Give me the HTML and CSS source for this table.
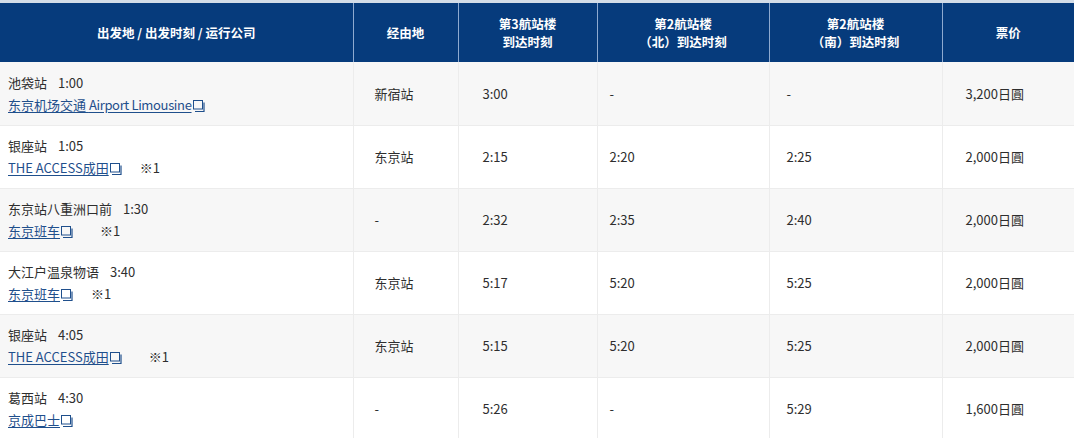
FILE: index.html
```html
<!DOCTYPE html>
<html lang="zh-CN">
<head>
<meta charset="utf-8">
<link rel="stylesheet" href="styles.css">
</head>
<body>
<table class="tt">
  <colgroup>
    <col class="c1"><col class="c2"><col class="c3"><col class="c4"><col class="c5"><col class="c6">
  </colgroup>
  <thead>
    <tr>
      <th>出发地 / 出发时刻 / 运行公司</th>
      <th>经由地</th>
      <th>第3航站楼<br>到达时刻</th>
      <th>第2航站楼<br>（北）到达时刻</th>
      <th>第2航站楼<br>（南）到达时刻</th>
      <th>票价</th>
    </tr>
  </thead>
  <tbody>
    <tr class="odd">
      <td class="from"><div>池袋站<span class="sp"></span>1:00</div><div><a href="#">东京机场交通 <span class="lat">Airport Limousine</span><svg class="ext" viewBox="0 0 12 12"><rect x="0.5" y="0.5" width="9" height="8.5" fill="none" stroke="currentColor"/><path d="M11 2.5V11.5H2" fill="none" stroke="currentColor" stroke-width="1.2"/></svg></a></div></td>
      <td class="p2">新宿站</td>
      <td class="p3">3:00</td>
      <td class="p4">-</td>
      <td class="p5">-</td>
      <td class="p6">3,200日圓</td>
    </tr>
    <tr>
      <td class="from"><div>银座站<span class="sp"></span>1:05</div><div><a href="#">THE ACCESS成田<svg class="ext" viewBox="0 0 12 12"><rect x="0.5" y="0.5" width="9" height="8.5" fill="none" stroke="currentColor"/><path d="M11 2.5V11.5H2" fill="none" stroke="currentColor" stroke-width="1.2"/></svg></a><span class="note gs">※1</span></div></td>
      <td class="p2">东京站</td>
      <td class="p3">2:15</td>
      <td class="p4">2:20</td>
      <td class="p5">2:25</td>
      <td class="p6">2,000日圓</td>
    </tr>
    <tr class="odd">
      <td class="from"><div>东京站八重洲口前<span class="sp"></span>1:30</div><div><a href="#">东京班车<svg class="ext" viewBox="0 0 12 12"><rect x="0.5" y="0.5" width="9" height="8.5" fill="none" stroke="currentColor"/><path d="M11 2.5V11.5H2" fill="none" stroke="currentColor" stroke-width="1.2"/></svg></a><span class="note gl">※1</span></div></td>
      <td class="p2">-</td>
      <td class="p3">2:32</td>
      <td class="p4">2:35</td>
      <td class="p5">2:40</td>
      <td class="p6">2,000日圓</td>
    </tr>
    <tr>
      <td class="from"><div>大江户温泉物语<span class="sp"></span>3:40</div><div><a href="#">东京班车<svg class="ext" viewBox="0 0 12 12"><rect x="0.5" y="0.5" width="9" height="8.5" fill="none" stroke="currentColor"/><path d="M11 2.5V11.5H2" fill="none" stroke="currentColor" stroke-width="1.2"/></svg></a><span class="note gs">※1</span></div></td>
      <td class="p2">东京站</td>
      <td class="p3">5:17</td>
      <td class="p4">5:20</td>
      <td class="p5">5:25</td>
      <td class="p6">2,000日圓</td>
    </tr>
    <tr class="odd">
      <td class="from"><div>银座站<span class="sp"></span>4:05</div><div><a href="#">THE ACCESS成田<svg class="ext" viewBox="0 0 12 12"><rect x="0.5" y="0.5" width="9" height="8.5" fill="none" stroke="currentColor"/><path d="M11 2.5V11.5H2" fill="none" stroke="currentColor" stroke-width="1.2"/></svg></a><span class="note gl">※1</span></div></td>
      <td class="p2">东京站</td>
      <td class="p3">5:15</td>
      <td class="p4">5:20</td>
      <td class="p5">5:25</td>
      <td class="p6">2,000日圓</td>
    </tr>
    <tr>
      <td class="from"><div>葛西站<span class="sp"></span>4:30</div><div><a href="#">京成巴士<svg class="ext" viewBox="0 0 12 12"><rect x="0.5" y="0.5" width="9" height="8.5" fill="none" stroke="currentColor"/><path d="M11 2.5V11.5H2" fill="none" stroke="currentColor" stroke-width="1.2"/></svg></a></div></td>
      <td class="p2">-</td>
      <td class="p3">5:26</td>
      <td class="p4">-</td>
      <td class="p5">5:29</td>
      <td class="p6">1,600日圓</td>
    </tr>
  </tbody>
</table>
</body>
</html>
```
FILE: styles.css
```css
html, body {
  margin: 0;
  padding: 0;
  background: #ffffff;
}
body {
  padding-top: 3px;
  background: linear-gradient(#d3dde8, #d3dde8) top left / 1074px 3px no-repeat, #fff;
  font-family: "Noto Sans CJK SC", "Noto Sans", sans-serif;
  font-size: 13px;
  color: #2e2e2e;
}
.tt {
  border-collapse: collapse;
  table-layout: fixed;
  width: 1074px;
}
.c1 { width: 353px; }
.c2 { width: 105px; }
.c3 { width: 139px; }
.c4 { width: 172px; }
.c5 { width: 173px; }
.c6 { width: 132px; }

.tt th {
  background: #063b7c;
  color: #fff;
  font-weight: bold;
  font-size: 12.5px;
  line-height: 18px;
  height: 59px;
  padding: 0 4px;
  box-sizing: border-box;
  text-align: center;
  vertical-align: middle;
  border-left: 1px solid #8eaad0;
}
.tt th:first-child { border-left: none; }

.tt td {
  height: 63px;
  box-sizing: border-box;
  vertical-align: middle;
  text-align: left;
  line-height: 21px;
  border-left: 1px solid #ececec;
  border-bottom: 1px solid #ececec;
  padding: 0;
}
.tt td:first-child { border-left: none; }
.tt tr.odd td { background: #f7f7f7; }

.from { padding-left: 8px !important; }
.from div:first-child { margin-bottom: 1px; }
.sp { display: inline-block; width: 11px; }
.p2 { padding-left: 21px !important; }
.p3 { padding-left: 24px !important; }
.p4 { padding-left: 12px !important; }
.p5 { padding-left: 17px !important; }
.p6 { padding-left: 23px !important; }

.tt a {
  color: #1f4f8c;
  text-decoration: underline;
  text-underline-offset: 2px;
}
.lat { letter-spacing: -0.35px; }
.ext {
  width: 12px;
  height: 12px;
  margin-left: 1px;
  vertical-align: -2px;
  color: #1f4f8c;
}
.note { color: #2e2e2e; }
.gs { margin-left: 18px; }
.gl { margin-left: 27px; }
```
